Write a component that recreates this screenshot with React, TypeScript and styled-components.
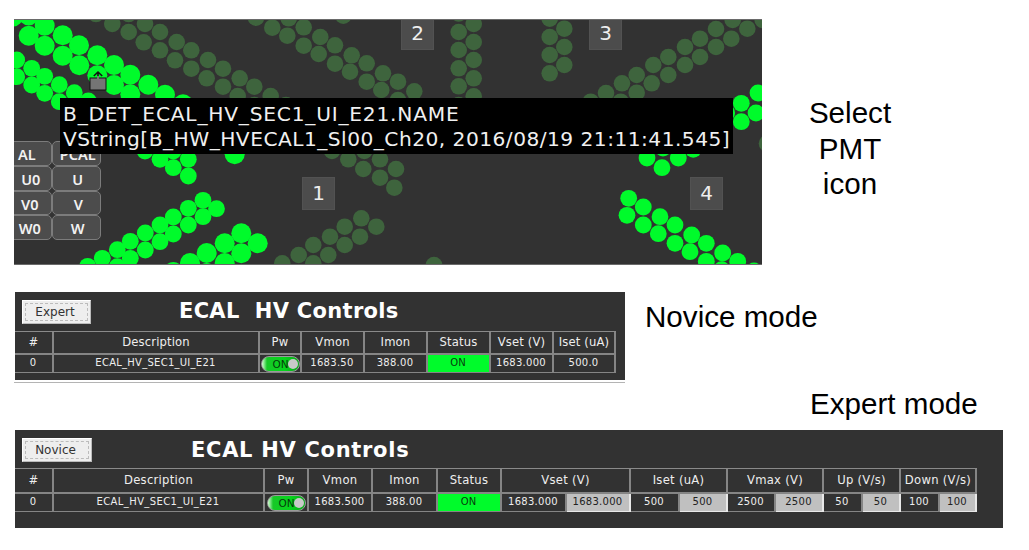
import React from "react";
import styled, { createGlobalStyle } from "styled-components";

const GlobalStyle = createGlobalStyle`
  * { box-sizing: border-box; }
  body { margin: 0; background: #fff; }
`;

const ui = `"DejaVu Sans", Verdana, sans-serif`;

const Page = styled.main`
  width: 1029px;
  height: 550px;
  padding: 19px 0 0 14px;
  overflow: hidden;
  display: flex;
  flex-direction: column;
  background: #fff;
`;

const Row = styled.section<{ $height: number }>`
  display: flex;
  flex: none;
  height: ${(p) => p.$height}px;
`;

const Caption = styled.p<{ $left?: number; $top: number; $width?: number }>`
  margin: ${(p) => p.$top}px 0 0 ${(p) => p.$left ?? 0}px;
  width: ${(p) => (p.$width ? `${p.$width}px` : "auto")};
  text-align: ${(p) => (p.$width ? "center" : "left")};
  font: 29.6px/35.5px "Liberation Sans", Arial, sans-serif;
  color: #000;
  white-space: nowrap;
`;

const DetectorMap = styled.div`
  position: relative;
  flex: none;
  width: 748px;
  height: 246px;
  overflow: hidden;
  background: #323232;
  border-top: 1px solid #6a6a6a;
  border-bottom: 1px solid #6a6a6a;
`;

const Tubes = styled.svg`
  position: absolute;
  left: 0;
  top: -1px;
`;

const SectorLabel = styled.div<{ $x: number; $y: number }>`
  position: absolute;
  left: ${(p) => p.$x}px;
  top: ${(p) => p.$y}px;
  width: 33px;
  height: 33px;
  background: #4c4c4c;
  border: 1px solid #525252;
  color: #eee;
  font: 20px/31px ${ui};
  text-align: center;
`;

const Tooltip = styled.div`
  position: absolute;
  left: 46px;
  top: 78px;
  width: 673px;
  height: 56px;
  padding: 4px 0 0 3px;
  background: #000;
  color: #f0f0f0;
  font: 20.2px/25px ${ui};
  white-space: nowrap;
`;

const TipLine = styled.div<{ $spacing: number }>`
  letter-spacing: ${(p) => p.$spacing}px;
`;

const Legend = styled.div`
  position: absolute;
  left: -12px;
  top: 121px;
  display: grid;
  grid-template-columns: 49.5px 49.5px;
  grid-template-rows: repeat(4, 24.8px);
  background: #333;
`;

const LegendCell = styled.div<{ $shift?: number }>`
  border: 1.5px solid #7c7c7c;
  border-radius: 5px;
  background: #4c4c4c;
  color: #f2f2f2;
  font: 600 14.5px/24px "Noto Sans", "Open Sans", sans-serif;
  text-align: center;
  padding-left: ${(p) => p.$shift ?? 0}px;
  white-space: nowrap;
`;

const Panel = styled.div<{ $width: number; $height: number }>`
  flex: none;
  width: ${(p) => p.$width}px;
  height: ${(p) => p.$height}px;
  margin-left: 1px;
  background: #323232;
  color: #eee;
  font-family: ${ui};
`;

const NoviceColumn = styled.div`
  flex: none;
  width: 611px;
  height: 91px;
  border-bottom: 1px solid #b4b4b4;
`;

const PanelHead = styled.header<{ $height: number }>`
  display: flex;
  height: ${(p) => p.$height}px;
`;

const ModeButton = styled.button<{ $top: number; $width: number }>`
  flex: none;
  width: ${(p) => p.$width}px;
  height: 24px;
  margin: ${(p) => p.$top}px 0 0 7px;
  padding: 2px;
  border: 1px solid #fff;
  border-right-color: #bbb;
  border-bottom-color: #bbb;
  background: #eee;
  color: #333;
  font: 12px/18px ${ui};
`;

const FocusRing = styled.span`
  display: block;
  height: 18px;
  padding-right: 3px;
  line-height: 17px;
  border: 1px dashed #bcbcbc;
`;

const Title = styled.h1<{ $left: number; $top: number; $spacing: number }>`
  margin: ${(p) => p.$top}px 0 0 ${(p) => p.$left}px;
  font: bold 21px/26px ${ui};
  letter-spacing: ${(p) => p.$spacing}px;
  color: #fff;
  white-space: pre;
`;

const Grid = styled.div<{ $columns: string; $rows: string; $headSpacing: number }>`
  display: grid;
  width: max-content;
  grid-template-columns: ${(p) => p.$columns};
  grid-template-rows: ${(p) => p.$rows};
  border-top: 1px solid #8a8a8a;
  --head-spacing: ${(p) => p.$headSpacing}px;
`;

const Head = styled.div<{ $span?: number }>`
  grid-column: span ${(p) => p.$span ?? 1};
  display: flex;
  align-items: center;
  justify-content: center;
  padding-bottom: 1px;
  border-right: 2px solid #858585;
  border-bottom: 2px solid #858585;
  font-size: 11.6px;
  letter-spacing: var(--head-spacing);
  white-space: nowrap;
`;

const tones = {
  plain: ["#323232", "#eee", "#858585"],
  input: ["#c0c0c0", "#222", "#e8e8e8"],
  on: ["#00fb2b", "#063c0c", "#858585"],
};

const Cell = styled.div<{ $tone?: keyof typeof tones; $spacing?: number }>`
  display: flex;
  align-items: center;
  justify-content: center;
  padding: 0 1px 2px 0;
  background: ${(p) => tones[p.$tone ?? "plain"][0]};
  color: ${(p) => tones[p.$tone ?? "plain"][1]};
  border-right: 2px solid ${(p) => tones[p.$tone ?? "plain"][2]};
  border-bottom: 1px solid ${(p) => tones[p.$tone ?? "plain"][2]};
  font-size: 10px;
  letter-spacing: ${(p) => p.$spacing ?? 0.28}px;
  white-space: nowrap;
`;

const SwitchCell = styled(Cell)`
  padding: 0;
`;

const Switch = styled.span`
  display: flex;
  flex: none;
  align-items: center;
  justify-content: flex-end;
  width: 39px;
  height: 16px;
  padding-right: 1px;
  border-radius: 8px;
  background: linear-gradient(90deg, #d8ffd8 0, #18c828 5px, #06d41c 60%, #0aa81a 100%);
  border: 1px solid #9a9a9a;
  color: #063c0c;
  font-size: 10.5px;
  letter-spacing: 0;
`;

const Knob = styled.span`
  width: 10px;
  height: 10px;
  margin-left: -1px;
  border-radius: 50%;
  background: #c9c9c9;
`;

type Point = [number, number];

const brightLarge: Point[] = [
  [13, 16.5], [28.7, 15.5], [28.7, 35.7], [44.7, 25.7], [44.7, 45.7], [62.7, 35.3], [62.7, 55.7],
  [79, 45.3], [79.3, 65.3], [97.3, 55.3], [97.3, 75.3], [114, 65], [114, 85], [130.3, 74.7],
  [130.3, 94.3], [148.3, 84.7], [165, 94.7], [183, 104.3], [234.7, 154.3], [206.7, 253],
  [190, 263], [173.3, 272], [241.3, 233.3], [224.7, 243.3], [241.3, 253.3], [257.7, 243.3],
  [224.7, 263],
  [206.7, 273],
];

const brightSmall: Point[] = [
  [16.7, 60], [16.7, 76.7], [31.7, 68.3], [31.7, 85], [44.7, 76.3], [44.7, 93.3], [59.3, 84.7],
  [59.3, 101.7], [74.3, 92.7], [88.3, 101], [145, 151], [160, 159.3], [173.3, 151],
  [173.3, 167.7], [188.3, 159.3], [188.3, 176], [203, 200.3], [203, 216.7], [216.5, 208.7],
  [188.3, 208.3], [188.3, 225], [173.3, 217], [173.3, 234], [160, 225], [160, 241.7],
  [145.3, 233], [145.3, 250], [130.3, 241.3], [130.3, 258.3], [117.3, 249.7], [117.3, 266.7],
  [102.3, 258.3], [87.7, 266.3], [741.3, 103.3], [758, 93], [741.3, 121.7], [756, 113],
  [726.7, 112.7], [647, 158], [663, 148], [662, 167.7], [678.3, 158], [693.3, 149.3],
  [628.7, 198.3], [627, 215.3], [643.3, 207], [643.3, 225], [660, 216.7], [658.3, 233.7],
  [675, 225], [675, 243.3], [691.7, 235], [690, 251.7], [706.3, 243.3], [706.3, 261.3],
  [722.7, 253], [721.7, 269.7], [737.7, 261.3], [754, 271],
];

const dim: Point[] = [
  [96, 14], [112.3, 24], [128.7, 32], [143.7, 42.3], [160, 50.3], [175, 60.3], [191.3, 68.7],
  [206.7, 78.3], [128.7, 14], [145, 24], [160, 32], [176.7, 42], [191.3, 50.3], [208, 60],
  [223, 68.7], [223, 86.7], [239.7, 78.3], [237.7, 96], [254.3, 86.7], [254.3, 105],
  [270.7, 96], [286, 105], [256, 17.7], [272.3, 27.7], [288.7, 18.3], [287.3, 35.7],
  [303.7, 27.3], [303.7, 45.7], [320.3, 37], [318.7, 54], [335, 45.3], [335, 63.7],
  [351.7, 55.3], [350, 71.7], [366.7, 63.3], [366.7, 81.7], [383, 73.3], [381.3, 90],
  [398, 81.7], [398, 100], [414.3, 91.3], [343.3, 15.7], [458.7, 13.5], [473.7, 24],
  [458.7, 32], [473.7, 42], [458.7, 50], [473.7, 60], [458.7, 68.3], [473.7, 78.3],
  [458.7, 86.3], [473.7, 96.3], [458.7, 105], [549.7, 18.7], [564.3, 28.7], [549.7, 37],
  [564.3, 47], [549.7, 55], [564.3, 65], [549.7, 73.3], [590.7, 101.7], [606, 93],
  [620.7, 101.7], [622, 83.3], [636.7, 92.7], [636.7, 75], [651.7, 83.3], [653.3, 65],
  [668.3, 75], [668.3, 57], [685, 65], [685, 47], [700, 57], [700, 38.7], [716, 47],
  [716, 29], [731.3, 38.7], [732.7, 20], [747.3, 28.7], [762.7, 20], [767, 143.5],
  [282.3, 263.3], [298.7, 255], [313.3, 245], [313.3, 263.3], [328.3, 255], [330, 236.7],
  [344.7, 245], [344.7, 226.7], [361.3, 218.3], [360, 236.7], [376.3, 226.7], [332, 151],
  [348.3, 159.3], [364.3, 151], [363.3, 169], [380, 159.3], [380, 177.7], [396, 169],
  [394.3, 187.7], [434, 265],
];

const Dots = ({ points, r, fill }: { points: Point[]; r: number; fill: string }) => (
  <g fill={fill}>
    {points.map(([x, y], i) => (
      <circle key={i} cx={x} cy={y} r={r} />
    ))}
  </g>
);

const PowerSwitch = () => (
  <Switch>
    ON
    <Knob />
  </Switch>
);

export default function App() {
  return (
    <>
      <GlobalStyle />
      <Page>
        <Row $height={273}>
          <DetectorMap>
            <Tubes width="748" height="246" viewBox="14 19 748 246">
              <Dots points={dim} r={8.3} fill="#3e643d" />
              <Dots points={brightLarge} r={10} fill="#00fb2b" />
              <Dots points={brightSmall} r={8.4} fill="#00fb2b" />
              <rect x="90" y="78" width="16" height="12" fill="#757575" stroke="#111" />
              <path d="M98 81V72.5M93.8 76L98 72L102.2 76" fill="none" stroke="#111" strokeWidth="1.6" />
              <path d="M98 83V76" stroke="#757575" strokeWidth="2" />
            </Tubes>
            <Legend>
              <LegendCell $shift={0}>AL</LegendCell>
              <LegendCell $shift={3}>PCAL</LegendCell>
              <LegendCell $shift={8}>U0</LegendCell>
              <LegendCell $shift={3}>U</LegendCell>
              <LegendCell $shift={6}>V0</LegendCell>
              <LegendCell $shift={4}>V</LegendCell>
              <LegendCell $shift={6}>W0</LegendCell>
              <LegendCell $shift={3}>W</LegendCell>
            </Legend>
            <SectorLabel $x={387} $y={-3}>2</SectorLabel>
            <SectorLabel $x={575} $y={-3}>3</SectorLabel>
            <SectorLabel $x={288} $y={157}>1</SectorLabel>
            <SectorLabel $x={676} $y={157}>4</SectorLabel>
            <Tooltip>
              <TipLine $spacing={0.78}>B_DET_ECAL_HV_SEC1_UI_E21.NAME</TipLine>
              <TipLine $spacing={0.47}>VString[B_HW_HVECAL1_Sl00_Ch20, 2016/08/19 21:11:41.545]</TipLine>
            </Tooltip>
          </DetectorMap>
          <Caption $left={28} $top={76} $width={120}>
            Select
            <br />
            PMT
            <br />
            icon
          </Caption>
        </Row>

        <Row $height={92}>
          <NoviceColumn>
            <Panel $width={610} $height={88}>
              <PanelHead $height={39}>
                <ModeButton $top={8} $width={69}>
                  <FocusRing>Expert</FocusRing>
                </ModeButton>
                <Title $left={88} $top={6} $spacing={0.3}>{"ECAL  HV Controls"}</Title>
              </PanelHead>
              <Grid
                $columns="39px 206px 42px 63px 63px 63px 63px 62px"
                $rows="23px 18px"
                $headSpacing={0.15}
              >
                <Head>#</Head>
                <Head>Description</Head>
                <Head>Pw</Head>
                <Head>Vmon</Head>
                <Head>Imon</Head>
                <Head>Status</Head>
                <Head>Vset (V)</Head>
                <Head>Iset (uA)</Head>
                <Cell>0</Cell>
                <Cell $spacing={0.26}>ECAL_HV_SEC1_UI_E21</Cell>
                <SwitchCell><PowerSwitch /></SwitchCell>
                <Cell>1683.50</Cell>
                <Cell>388.00</Cell>
                <Cell $tone="on" $spacing={0}>ON</Cell>
                <Cell>1683.000</Cell>
                <Cell>500.0</Cell>
              </Grid>
            </Panel>
          </NoviceColumn>
          <Caption $left={20} $top={7}>Novice mode</Caption>
        </Row>

        <Row $height={46}>
          <Caption $left={796} $top={2}>Expert mode</Caption>
        </Row>

        <Row $height={98}>
          <Panel $width={988} $height={98}>
            <PanelHead $height={38}>
              <ModeButton $top={8} $width={70}>
                <FocusRing>Novice</FocusRing>
              </ModeButton>
              <Title $left={99} $top={7} $spacing={0.7}>ECAL HV Controls</Title>
            </PanelHead>
            <Grid
              $columns="39px 211px 44px 64px 65px 64px 65px 64px 49px 48px 48px 48px 39px 38px 39px 37px"
              $rows="25px 18px"
              $headSpacing={0.28}
            >
              <Head>#</Head>
              <Head>Description</Head>
              <Head>Pw</Head>
              <Head>Vmon</Head>
              <Head>Imon</Head>
              <Head>Status</Head>
              <Head $span={2}>Vset (V)</Head>
              <Head $span={2}>Iset (uA)</Head>
              <Head $span={2}>Vmax (V)</Head>
              <Head $span={2}>Up (V/s)</Head>
              <Head $span={2}>Down (V/s)</Head>
              <Cell>0</Cell>
              <Cell $spacing={0.4}>ECAL_HV_SEC1_UI_E21</Cell>
              <SwitchCell><PowerSwitch /></SwitchCell>
              <Cell>1683.500</Cell>
              <Cell>388.00</Cell>
              <Cell $tone="on" $spacing={0}>ON</Cell>
              <Cell>1683.000</Cell>
              <Cell $tone="input">1683.000</Cell>
              <Cell>500</Cell>
              <Cell $tone="input">500</Cell>
              <Cell>2500</Cell>
              <Cell $tone="input">2500</Cell>
              <Cell>50</Cell>
              <Cell $tone="input">50</Cell>
              <Cell>100</Cell>
              <Cell $tone="input">100</Cell>
            </Grid>
          </Panel>
        </Row>
      </Page>
    </>
  );
}
